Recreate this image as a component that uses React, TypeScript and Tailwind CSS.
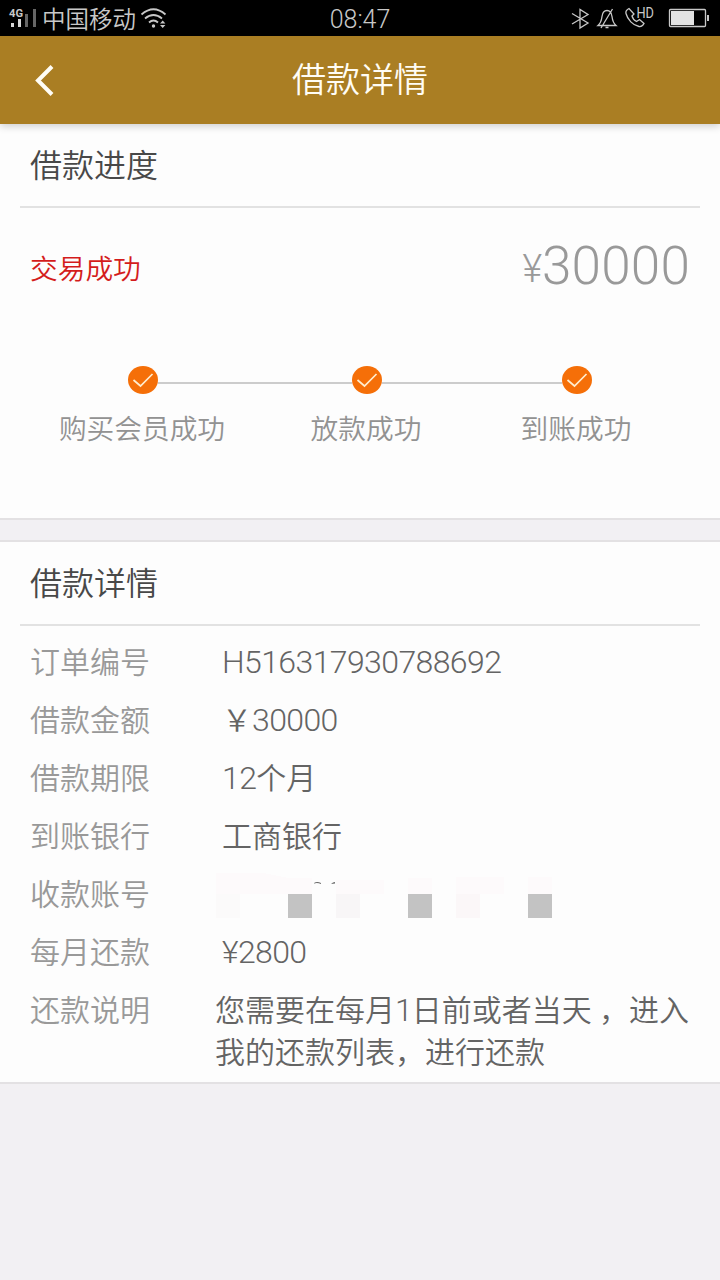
import React from 'react';

const steps = [
  { label: '购买会员成功', className: 'w-[168px]' },
  { label: '放款成功', className: 'ml-[84px] w-[112px]' },
  { label: '到账成功', className: 'ml-[98px] w-[112px]' },
];

const StatusBar: React.FC = () => (
  <div className="flex h-9 items-center bg-black text-[#c8c8c8]">
    <div className="flex flex-1 items-center">
      <svg className="ml-2 h-9 w-[30px] shrink-0" viewBox="8 0 30 36">
        <text x="9" y="16.5" fontSize="10" fontWeight="700" fontFamily="Roboto, sans-serif" fill="#c8c8c8" textLength="14" lengthAdjust="spacingAndGlyphs">4G</text>
        <path d="M11 23h3v4h-3zM18 19h3v8h-3z" fill="#d8d8d8" />
        <path d="M25 14h3v13h-3zM33 9h3v18h-3z" fill="#666" />
      </svg>
      <span className="ml-1 pt-[3px] text-[23.5px] leading-9">中国移动</span>
      <svg className="ml-1 h-9 w-7 shrink-0" viewBox="140 0 28 36" fill="none" stroke="#c8c8c8" strokeWidth="1.8">
        <path d="M141.5 14.5Q153.5 4 165.5 14.5M145 18.5Q153.5 11.5 162 18.5M149 22.5Q153.5 18.5 158 22.5" />
        <circle cx="153.5" cy="26" r="1.7" fill="#c8c8c8" stroke="none" />
        <path d="M160 23.5l2.7-3 2.7 3zM160 25l2.7 3 2.7-3z" fill="#c8c8c8" stroke="none" />
      </svg>
    </div>
    <span className="pt-[3px] text-[25px] leading-9">08:47</span>
    <div className="flex flex-1 justify-end">
      <svg className="h-9 w-[150px]" viewBox="570 0 150 36" fill="none" stroke="#c8c8c8" strokeWidth="1.3">
        <path d="M572 13.5l16 9.500-8 5V9.500l8 5L572 24" />
        <path d="M598 25.500c3-2.500 3.500-5 4-9 .5-4 2-6 5-6s4.500 2 5 6c.5 4 1 6.500 4 9zM601 28l11.500-19M605.500 27.500h3" />
        <path d="M629 8.500c-2 1-3.500 3-3 5 1.500 6 7 12 13 13 2 .3 4-1 5-3l-4.500-4-3 2c-2-1-4-3.500-4.500-5.500l2-2z" />
        <text x="636.5" y="17.5" fontSize="15" fontWeight="400" fontFamily="Roboto, sans-serif" fill="#c8c8c8" stroke="none" textLength="17.5" lengthAdjust="spacingAndGlyphs">HD</text>
        <rect x="669.5" y="9.5" width="36" height="17" rx="1" />
        <path d="M671 11h23v14h-23z" fill="#e2e2e2" stroke="none" />
        <path d="M707 15h2v6h-2z" fill="#c8c8c8" stroke="none" />
      </svg>
    </div>
  </div>
);

const Header: React.FC = () => (
  <header className="relative z-10 flex h-[88px] items-center bg-[#aa7e23] text-[#fffdf5] shadow-[0_2px_8px_rgba(0,0,0,0.2)]">
    <svg className="ml-8 h-8 w-6" viewBox="0 0 24 32" fill="none" stroke="currentColor" strokeWidth="4">
      <path d="M20 2.5L6 16.5l14 14" />
    </svg>
    <h1 className="mr-14 flex-1 text-center text-[34px] leading-[88px]">借款详情</h1>
  </header>
);

const SectionTitle: React.FC<{ children: React.ReactNode }> = ({ children }) => (
  <h2 className="mx-5 h-[84px] border-b-2 border-[#e2e2e2] px-2.5 text-[32px] leading-[84px] text-[#484848]">{children}</h2>
);

const CheckMark: React.FC = () => (
  <svg className="h-7 w-[30px] shrink-0" viewBox="0 0 30 28" fill="none">
    <ellipse cx="15" cy="14" rx="15" ry="14" fill="#f56f08" />
    <path d="M5.5 14l7 6L24.5 8" stroke="#ffedcf" strokeWidth="1.7" />
  </svg>
);

const Row: React.FC<{ label: string; children: React.ReactNode }> = ({ label, children }) => (
  <div className="flex h-[58px] items-center pl-[30px] text-[30px] leading-[58px]">
    <dt className="w-48 pt-px text-[#999]">{label}</dt>
    <dd className="text-[#646464]">{children}</dd>
  </div>
);

// narrow digits, same advance for every figure
const Digits: React.FC<{ children: React.ReactNode }> = ({ children }) => (
  <span className="text-[32px] tracking-[-0.6px]">{children}</span>
);

// masked account number
const MaskedAccount: React.FC = () => (
  <svg className="-ml-1.5 h-[58px] w-[336px]" viewBox="216 865 336 58" shapeRendering="crispEdges">
    <path d="M216 873h48l24 5h24v16h-96zM336 880h48v14h-48zM408 878h24v16h-24zM456 877h48v17h-48zM528 877h24v17h-24z" fill="#fdfafb" />
    <path d="M216 894h24v24h-24z" fill="#fbfafa" />
    <path d="M336 894h24v24h-24z" fill="#f8f6f7" />
    <path d="M456 894h24v24h-24z" fill="#fbf7f8" />
    <path d="M288 894h24v24h-24zM408 894h24v24h-24zM528 894h24v24h-24z" fill="#c3c3c3" />
    <path d="M314 883q3-2 7 0v1q-3.500-1.500-7-.5zM331 884q2-2 4-2v1.500z" fill="#666" shapeRendering="auto" />
  </svg>
);

export default function App() {
  return (
    <div lang="zh-CN" className="h-[1280px] w-[720px] overflow-hidden bg-[#f2f0f3] font-['Roboto','Noto_Sans_CJK_SC',sans-serif] font-[350] whitespace-nowrap">
      <StatusBar />
      <Header />
      <section className="h-[396px] border-b-2 border-[#e3e1e3] bg-[#fdfdfd]">
        <SectionTitle>借款进度</SectionTitle>
        <div className="flex h-[118px] items-center justify-between px-[30px]">
          <span className="pt-[5px] text-[27.7px] text-[#d41c1c]">交易成功</span>
          <div className="text-[#999]">
            <span className="align-[2px] text-[38px] leading-none">¥</span>
            <span className="text-[53px] tracking-[0.2px]">30000</span>
          </div>
        </div>
        <div className="mt-10 flex items-center pl-32">
          <CheckMark />
          <div className="mt-1.5 h-0.5 w-[194px] bg-[#ccc]" />
          <CheckMark />
          <div className="mt-1.5 h-0.5 w-[180px] bg-[#ccc]" />
          <CheckMark />
        </div>
        <div className="mt-[15px] flex pl-[58px] text-center text-[27.7px] leading-[42px] text-[#929292]">
          {steps.map((step) => (
            <span key={step.label} className={step.className}>{step.label}</span>
          ))}
        </div>
      </section>

      <section className="mt-5 h-[544px] border-y-2 border-[#e3e1e3] bg-[#fdfdfd]">
        <SectionTitle>借款详情</SectionTitle>
        <dl className="pt-[7px]">
          <Row label="订单编号"><Digits>H516317930788692</Digits></Row>
          <Row label="借款金额">￥<Digits>30000</Digits></Row>
          <Row label="借款期限"><Digits>12</Digits>个月</Row>
          <Row label="到账银行"><span className="block pt-px">工商银行</span></Row>
          <Row label="收款账号"><MaskedAccount /></Row>
          <Row label="每月还款"><Digits>¥2800</Digits></Row>
          <div className="flex pt-[9px] pl-[30px] text-[30px] leading-[42px]">
            <dt className="w-[185px] text-[#999]">还款说明</dt>
            <dd className="text-[#646464]">
              您需要在每月<span className="text-[32px] leading-none tracking-[-1px]">1</span>日前或者当天 ，进入
              <br />
              我的还款列表，进行还款
            </dd>
          </div>
        </dl>
      </section>
    </div>
  );
}
